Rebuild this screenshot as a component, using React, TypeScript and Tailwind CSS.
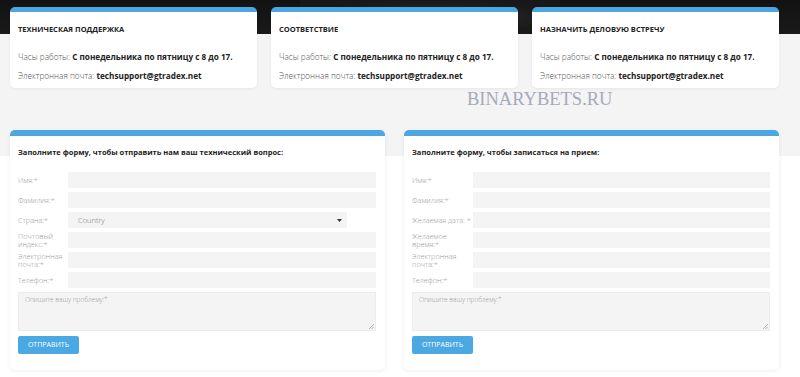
import React from "react";

type Field = { label: string; select?: boolean };

const infoCards = [
  { title: "Техническая поддержка" },
  { title: "Соответствие" },
  { title: "Назначить деловую встречу" },
];

const supportFields: Field[] = [
  { label: "Имя:*" },
  { label: "Фамилия:*" },
  { label: "Страна:*", select: true },
  { label: "Почтовый индекс:*" },
  { label: "Электронная почта:*" },
  { label: "Телефон:*" },
];

const meetingFields: Field[] = [
  { label: "Имя:*" },
  { label: "Фамилия:*" },
  { label: "Желаемая дата: *" },
  { label: "Желаемое время:*" },
  { label: "Электронная почта:*" },
  { label: "Телефон:*" },
];

function InfoCard({ title }: { title: string }) {
  return (
    <div className="h-[81px] rounded-[5px] border-t-[5px] border-[#4ba6e1] bg-white px-[8px] pt-[12px] shadow-[0_1px_3px_rgba(0,0,0,0.06)]">
      <div className="text-[7.5px] font-bold uppercase leading-[10px] text-[#222]">{title}</div>
      <div className="mt-[17px] text-[8.2px] leading-[12px] text-[#222]">
        <span className="font-light text-[#555]">Часы работы: </span>
        <span className="font-bold">С понедельника по пятницу с 8 до 17.</span>
      </div>
      <div className="mt-[7px] text-[8.2px] leading-[12px] text-[#222]">
        <span className="font-light text-[#555]">Электронная почта: </span>
        <span className="font-bold">techsupport@gtradex.net</span>
      </div>
    </div>
  );
}

function FormCard({
  title,
  fields,
  labelWidth,
}: {
  title: string;
  fields: Field[];
  labelWidth: string;
}) {
  return (
    <div className="h-[240px] rounded-[5px] border-t-[6px] border-[#4ba6e1] bg-white pl-[8px] pr-[9px] pt-[10px] shadow-[0_1px_4px_rgba(0,0,0,0.07)]">
      <div className="text-[7.5px] font-bold leading-[12px] text-[#222]">{title}</div>
      <div className="mt-[14px] flex flex-col gap-[4px]">
        {fields.map((f) => (
          <div key={f.label} className="flex h-[16px] items-center">
            <div className={`${labelWidth} shrink-0 text-[7.3px] font-light leading-[8px] text-[#999]`}>
              {f.label}
            </div>
            {f.select ? (
              <div className="flex h-[16px] w-[279px] items-center justify-between bg-[#f4f4f4] pl-[10px] pr-[5px]">
                <span className="text-[7.5px] font-light leading-[10px] text-[#777]">Country</span>
                <svg width="5" height="3" viewBox="0 0 5 3">
                  <path d="M0 0h5L2.5 3z" fill="#333" />
                </svg>
              </div>
            ) : (
              <div className="h-[16px] flex-1 bg-[#f4f4f4]" />
            )}
          </div>
        ))}
      </div>
      <div className="relative mt-[4px] h-[39px] border border-[#ececec] bg-[#f4f4f4] px-[6px] pt-[2px] text-[6.5px] leading-[10px]">
        <span className="font-light text-[#9a9a9a]">Опишите вашу проблему:*</span>
        <svg className="absolute bottom-[1px] right-[1px]" width="5" height="5" viewBox="0 0 5 5">
          <path d="M5 0L0 5M5 2.5L2.5 5" stroke="#999" strokeWidth="0.7" />
        </svg>
      </div>
      <div className="mt-[5px] flex h-[18px] w-[61px] items-center justify-center rounded-[2px] bg-[#4aa9e3] text-[7px] leading-[10px] text-white">
        ОТПРАВИТЬ
      </div>
    </div>
  );
}

export default function App() {
  return (
    <div className="relative h-[377px] w-[800px] overflow-hidden bg-[linear-gradient(to_bottom,#121212_0,#1a1a1a_34px,#f4f4f4_34px,#f4f4f4_156px,#ffffff_156px)] font-['Open_Sans',sans-serif]">
      <div className="absolute left-[300px] top-0 h-[34px] w-[260px] bg-[radial-gradient(ellipse_at_center,#3a3a3a_0%,#1a1a1a_70%)] opacity-70" />
      <div className="relative w-[779px] pl-[10px] pt-[7px]">
        <div className="grid grid-cols-3 gap-[14px]">
          {infoCards.map((c) => (
            <InfoCard key={c.title} title={c.title} />
          ))}
        </div>
        <div className="mt-[42px] grid grid-cols-2 gap-[19px]">
          <FormCard
            title="Заполните форму, чтобы отправить нам ваш технический вопрос:"
            fields={supportFields}
            labelWidth="w-[50px]"
          />
          <FormCard
            title="Заполните форму, чтобы записаться на прием:"
            fields={meetingFields}
            labelWidth="w-[61px]"
          />
        </div>
      </div>
      <div className="absolute left-[467px] top-[88px] font-['Liberation_Serif',serif] text-[18.5px] leading-[22px] text-[#9ea2b4] opacity-90">
        BINARYBETS.RU
      </div>
    </div>
  );
}
